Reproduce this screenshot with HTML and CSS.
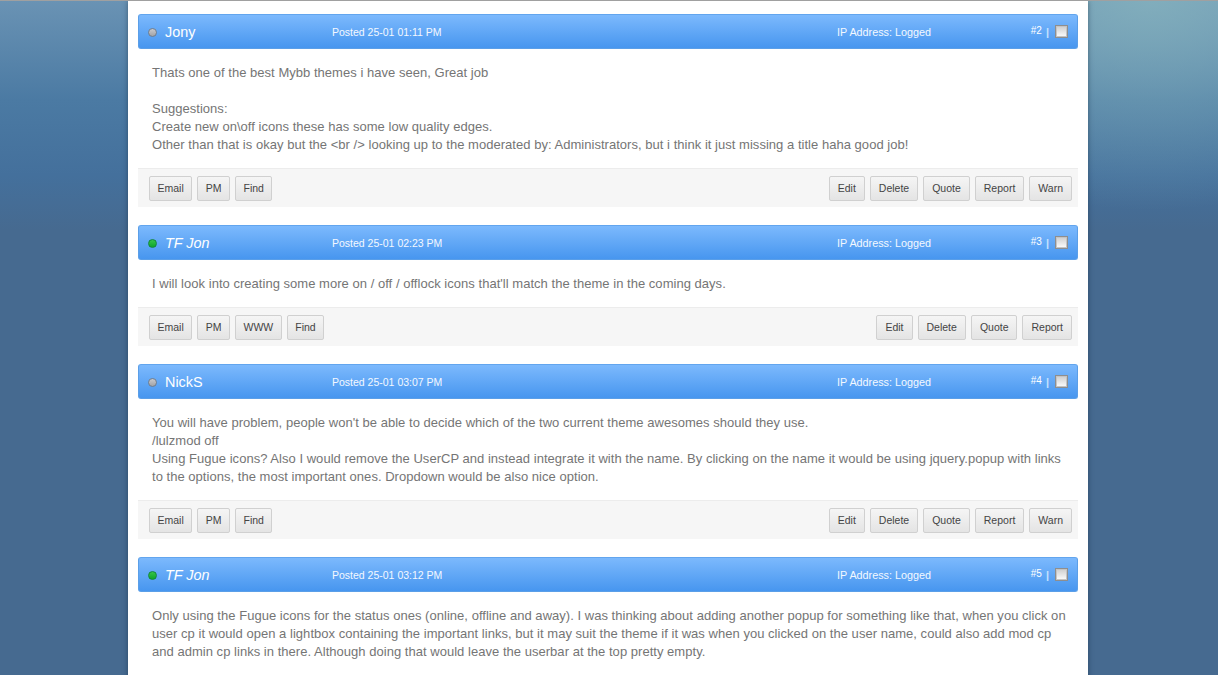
FILE: index.html
```html
<!DOCTYPE html>
<html lang="en">
<head>
<meta charset="utf-8">
<title>Thread</title>
<link rel="stylesheet" href="styles.css">
</head>
<body>
<div class="wrapper">

<article class="post">
  <header class="post-head">
    <div class="author"><span class="status off"></span><span class="name">Jony</span></div>
    <div class="posted">Posted 25-01 01:11 PM</div>
    <div class="ip">IP Address: Logged</div>
    <div class="num"><span class="num-text">#2</span><span class="sep">|</span><span class="check"></span></div>
  </header>
  <div class="post-body">
    <p>Thats one of the best Mybb themes i have seen, Great job</p>
    <p>&nbsp;</p>
    <p>Suggestions:</p>
    <p>Create new on\off icons these has some low quality edges.</p>
    <p>Other than that is okay but the &lt;br /&gt; looking up to the moderated by: Administrators, but i think it just missing a title haha good job!</p>
  </div>
  <footer class="post-foot">
    <div class="btns user"><a class="btn">Email</a><a class="btn">PM</a><a class="btn">Find</a></div>
    <div class="btns"><a class="btn">Edit</a><a class="btn">Delete</a><a class="btn">Quote</a><a class="btn">Report</a><a class="btn">Warn</a></div>
  </footer>
</article>

<article class="post">
  <header class="post-head">
    <div class="author"><span class="status on"></span><span class="name staff">TF Jon</span></div>
    <div class="posted">Posted 25-01 02:23 PM</div>
    <div class="ip">IP Address: Logged</div>
    <div class="num"><span class="num-text">#3</span><span class="sep">|</span><span class="check"></span></div>
  </header>
  <div class="post-body">
    <p>I will look into creating some more on / off / offlock icons that'll match the theme in the coming days.</p>
  </div>
  <footer class="post-foot">
    <div class="btns user"><a class="btn">Email</a><a class="btn">PM</a><a class="btn">WWW</a><a class="btn">Find</a></div>
    <div class="btns"><a class="btn">Edit</a><a class="btn">Delete</a><a class="btn">Quote</a><a class="btn">Report</a></div>
  </footer>
</article>

<article class="post">
  <header class="post-head">
    <div class="author"><span class="status off"></span><span class="name">NickS</span></div>
    <div class="posted">Posted 25-01 03:07 PM</div>
    <div class="ip">IP Address: Logged</div>
    <div class="num"><span class="num-text">#4</span><span class="sep">|</span><span class="check"></span></div>
  </header>
  <div class="post-body">
    <p>You will have problem, people won't be able to decide which of the two current theme awesomes should they use.</p>
    <p>/lulzmod off</p>
    <p>Using Fugue icons? Also I would remove the UserCP and instead integrate it with the name. By clicking on the name it would be using jquery.popup with links to the options, the most important ones. Dropdown would be also nice option.</p>
  </div>
  <footer class="post-foot">
    <div class="btns user"><a class="btn">Email</a><a class="btn">PM</a><a class="btn">Find</a></div>
    <div class="btns"><a class="btn">Edit</a><a class="btn">Delete</a><a class="btn">Quote</a><a class="btn">Report</a><a class="btn">Warn</a></div>
  </footer>
</article>

<article class="post">
  <header class="post-head">
    <div class="author"><span class="status on"></span><span class="name staff">TF Jon</span></div>
    <div class="posted">Posted 25-01 03:12 PM</div>
    <div class="ip">IP Address: Logged</div>
    <div class="num"><span class="num-text">#5</span><span class="sep">|</span><span class="check"></span></div>
  </header>
  <div class="post-body">
    <p>Only using the Fugue icons for the status ones (online, offline and away). I was thinking about adding another popup for something like that, when you click on user cp it would open a lightbox containing the important links, but it may suit the theme if it was when you clicked on the user name, could also add mod cp and admin cp links in there. Although doing that would leave the userbar at the top pretty empty.</p>
  </div>
</article>

</div>
</body>
</html>
```
FILE: styles.css
```css
html, body {
  margin: 0;
  height: 675px;
  overflow: hidden;
}
body {
  font-family: "Liberation Sans", Arial, sans-serif;
  border-top: 1px solid #a0a0a0;
  box-sizing: border-box;
  background:
    radial-gradient(ellipse 320px 210px at 1150px 0, rgba(135, 180, 190, .8), rgba(135, 180, 190, 0)),
    linear-gradient(to bottom, #6a93b4 0, #4b7aa3 100px, #44709c 175px, #466a90 230px, #466a90 100%);
}
.wrapper {
  width: 940px;
  height: 674px;
  margin-left: 128px;
  padding: 13px 10px 0;
  background: #fff;
  box-shadow: 0 0 5px rgba(20, 40, 60, .5);
}
.post {
  margin-bottom: 18px;
}
.post-head {
  height: 35px;
  box-sizing: border-box;
  display: grid;
  grid-template-columns: 184px 505px 1fr auto;
  align-items: center;
  padding: 0 9px 0 9px;
  border: 1px solid #5b9fe8;
  border-top-color: #62a5ee;
  border-radius: 3px;
  background: linear-gradient(to bottom, #7cb9fd, #4796ef);
  color: #fff;
  font-size: 10px;
}
.author {
  display: flex;
  align-items: center;
  gap: 8px;
}
.status {
  width: 9px;
  height: 9px;
  box-sizing: border-box;
  margin-top: 1px;
  border-radius: 50%;
  border: 1px solid;
}
.status.off {
  border-color: #717d8c;
  background: linear-gradient(to bottom, #c9c9cc, #a2a4a8);
}
.status.on {
  border-color: #12873a;
  background: linear-gradient(to bottom, #36c44a, #0fa62a);
}
.name {
  font-size: 14.4px;
}
.name.staff {
  font-style: italic;
}
.posted {
  font-size: 10.5px;
  color: #f3f8ff;
}
.ip {
  font-size: 10.8px;
  color: #f3f8ff;
}
.num {
  display: flex;
  align-items: center;
  gap: 4px;
}
.num-text {
  position: relative;
  top: -1px;
}
.sep {
  color: #c6e2ff;
  font-size: 11px;
  font-weight: bold;
  margin-right: 2px;
}
.check {
  width: 11px;
  height: 11px;
  border: 1px solid #8e8e8e;
  background: linear-gradient(to bottom, #cdcdcd, #fdfdfd);
  box-shadow: inset 0 0 0 1px #c4c4c4;
}
.post-body {
  padding: 15px 10px 14px 14px;
  font-size: 13px;
  line-height: 18px;
  letter-spacing: .03px;
  color: #757575;
}
.post-body p {
  margin: 0;
}
.post-foot {
  display: flex;
  justify-content: space-between;
  padding: 7px 6px 0 11px;
  box-sizing: border-box;
  height: 39px;
  border-top: 1px solid #ececec;
  background: #f6f6f6;
}
.btns {
  display: flex;
  gap: 5px;
}
.btn {
  height: 25px;
  box-sizing: border-box;
  padding: 0 8px 1px;
  display: flex;
  align-items: center;
  border: 1px solid #d0d0d0;
  border-radius: 2px;
  background: linear-gradient(to bottom, #f5f5f5, #e4e4e4);
  color: #444;
  font-size: 10.5px;
}
.user .btn {
  padding: 0 7.5px 1px;
}
```
